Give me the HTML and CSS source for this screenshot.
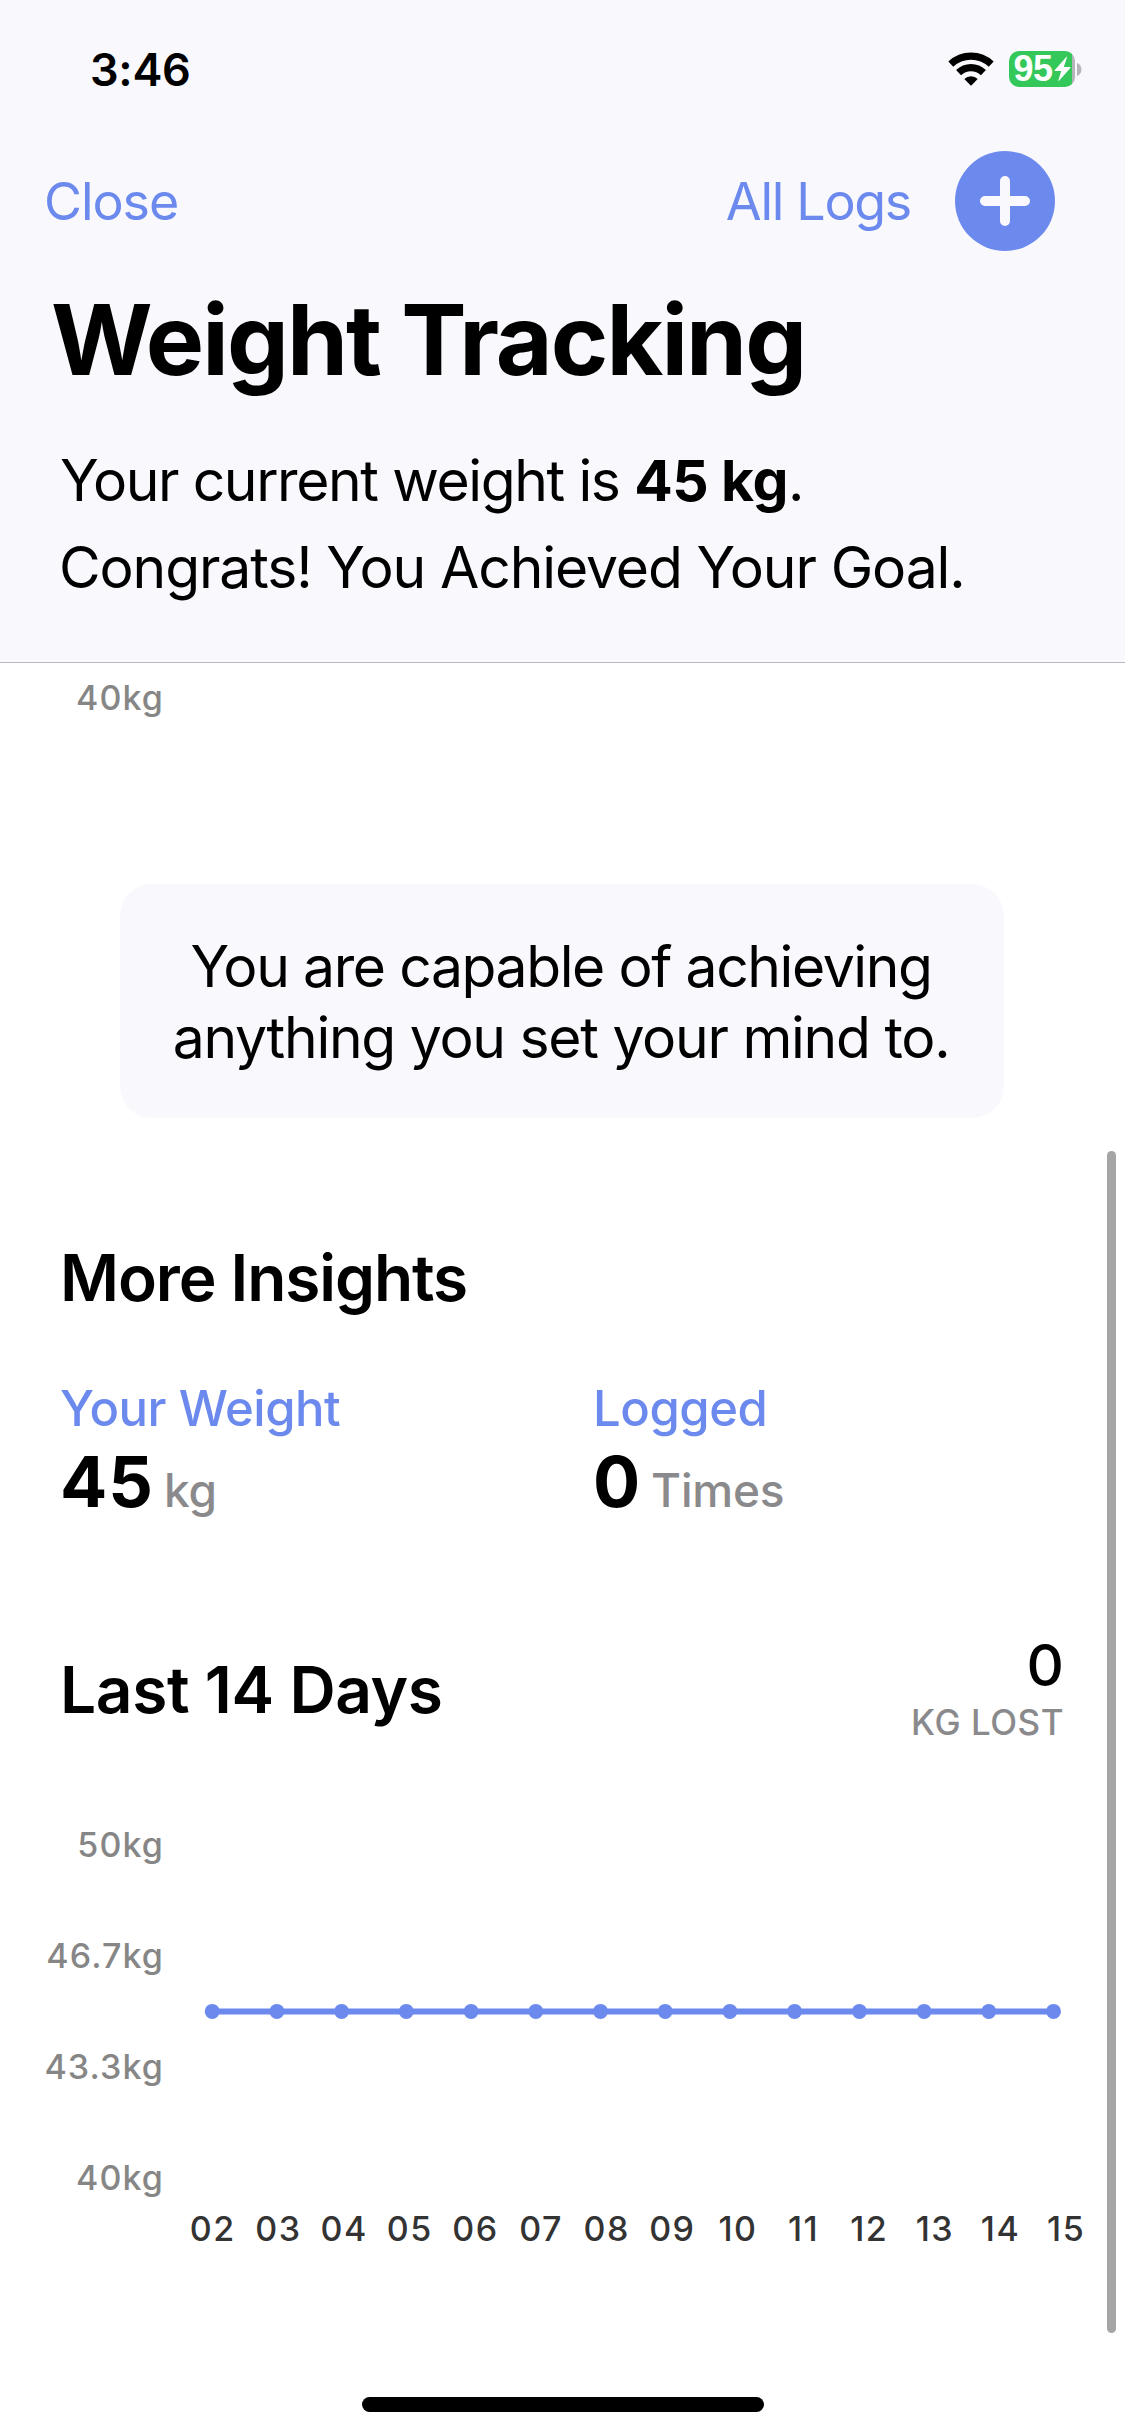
FILE: index.html
```html
<!DOCTYPE html>
<html lang="en">
<head>
<meta charset="utf-8">
<title>Weight Tracking</title>
<link rel="stylesheet" href="styles.css">
</head>
<body>
<div class="screen">
  <header class="header">
    <div class="status-bar">
      <span class="time">3:46</span>
      <div class="status-icons">
        <svg class="wifi" width="46" height="34" viewBox="0 0 46 34" fill="none" stroke="#000" stroke-width="7.2">
          <path d="M2.8 12.2A29.5 29.5 0 0 1 43.2 12.2"/>
          <path d="M10.6 20.6A17.8 17.8 0 0 1 35.4 20.6"/>
          <path d="M16.3 27A9.6 9.6 0 0 1 29.7 27L23 33.8Z" fill="#000" stroke="none"/>
        </svg>
        <div class="battery">
          <div class="battery-body">
            <span class="battery-level">95</span>
            <svg class="bolt" width="17" height="26" viewBox="0 0 17 26"><path d="M12.5 0.8L0.6 14.2Q0.2 15 1.1 15H7.2L4.3 24.6Q4.4 25.3 5 24.8L16.4 12Q16.7 11 15.9 11H9.8L13 1.2Q13 .5 12.5 .8Z" fill="#fff"/></svg>
          </div>
          <svg width="5" height="13" viewBox="0 0 5 13"><path d="M0 0Q4.4 1.6 4.4 6.5T0 13Z" fill="#b4b4b9"/></svg>
        </div>
      </div>
    </div>
    <nav class="nav">
      <a class="nav-link">Close</a>
      <div class="nav-actions">
        <a class="nav-link nav-logs">All Logs</a>
        <svg width="100" height="100" viewBox="0 0 100 100"><circle cx="50" cy="50" r="50" fill="#6c8aee"/><path d="M30 50H70M50 30V70" stroke="#f9f8fd" stroke-width="10" stroke-linecap="round"/></svg>
      </div>
    </nav>
    <h1 class="title">Weight Tracking</h1>
    <p class="summary">Your current weight is <strong>45 kg</strong>.</p>
    <p class="summary summary-goal">Congrats! You Achieved Your Goal.</p>
  </header>
  <main>
    <div class="axis-label axis-label-first">40kg</div>
    <div class="quote"><span class="quote-top">You are capable of achieving</span><span class="quote-bottom">anything you set your mind to.</span></div>
    <h2 class="heading insights-heading">More Insights</h2>
    <div class="insights">
      <div>
        <div class="insight-label">Your Weight</div>
        <div class="insight-value"><b>45</b><span>kg</span></div>
      </div>
      <div>
        <div class="insight-label">Logged</div>
        <div class="insight-value"><b>0</b><span>Times</span></div>
      </div>
    </div>
    <div class="period">
      <h2 class="heading period-heading">Last 14 Days</h2>
      <div class="lost"><div class="lost-value">0</div><div class="lost-label">KG LOST</div></div>
    </div>
    <div class="chart">
      <div class="y-axis">
        <div class="axis-label">50kg</div>
        <div class="axis-label">46.7kg</div>
        <div class="axis-label">43.3kg</div>
        <div class="axis-label">40kg</div>
      </div>
      <div class="plot">
        <svg class="line" width="920" height="420" viewBox="0 0 920 420" fill="#6c8aee">
          <path d="M33.2 222.4H874.5" stroke="#6c8aee" stroke-width="6"/>
          <circle cx="33.2" cy="222.4" r="7.5"/><circle cx="97.9" cy="222.4" r="7.5"/><circle cx="162.6" cy="222.4" r="7.5"/><circle cx="227.3" cy="222.4" r="7.5"/><circle cx="292.1" cy="222.4" r="7.5"/><circle cx="356.8" cy="222.4" r="7.5"/><circle cx="421.5" cy="222.4" r="7.5"/><circle cx="486.2" cy="222.4" r="7.5"/><circle cx="550.9" cy="222.4" r="7.5"/><circle cx="615.6" cy="222.4" r="7.5"/><circle cx="680.4" cy="222.4" r="7.5"/><circle cx="745.1" cy="222.4" r="7.5"/><circle cx="809.8" cy="222.4" r="7.5"/><circle cx="874.5" cy="222.4" r="7.5"/>
        </svg>
        <div class="x-axis"><span>02</span><span>03</span><span>04</span><span>05</span><span>06</span><span>07</span><span>08</span><span>09</span><span>10</span><span>11</span><span>12</span><span>13</span><span>14</span><span>15</span></div>
      </div>
    </div>
  </main>
  <div class="home-indicator"></div>
  <div class="scrollbar"></div>
</div>
</body>
</html>
```
FILE: styles.css
```css
* { box-sizing: border-box; }
body {
  margin: 0;
  background: #fff;
  color: #000;
  font-family: Inter, "Liberation Sans", sans-serif;
}
h1, h2, p { margin: 0; }
svg { display: block; }
.screen {
  position: relative;
  display: flex;
  flex-direction: column;
  width: 1125px;
  height: 2436px;
  overflow: hidden;
}

/* Header */
.header {
  height: 663px;
  background: #f9f8fd;
  border-bottom: 1px solid #bab9bf;
}
.status-bar {
  display: flex;
  align-items: center;
  justify-content: space-between;
  height: 138px;
  padding: 0 43px 0 90px;
}
.time { font-size: 45px; font-weight: 600; letter-spacing: -0.3px; }
.status-icons { display: flex; align-items: center; gap: 15px; }
.battery { display: flex; align-items: center; gap: 2.5px; }
.battery-body {
  display: flex;
  align-items: center;
  width: 66px;
  height: 36px;
  padding-left: 5px;
  border-radius: 10px;
  background: linear-gradient(to right, #34c759 63px, #b4b4b9 63px);
}
.battery-level {
  width: 40px;
  font: 700 36px/36px "Liberation Sans", sans-serif;
  letter-spacing: -0.6px;
  color: #fff;
}
.nav {
  display: flex;
  align-items: center;
  justify-content: space-between;
  height: 126px;
  padding: 0 70px 0 44px;
}
.nav-actions { display: flex; align-items: center; gap: 44px; }
.nav-link { font-size: 52px; color: #6c8aee; letter-spacing: -1.05px; }
.nav-logs { letter-spacing: -1.31px; }
.title {
  padding-left: 51px;
  margin-bottom: 22px;
  font-size: 98px;
  line-height: 151px;
  letter-spacing: -1.93px;
}
.summary {
  padding-left: 60px;
  font-size: 57px;
  line-height: 87px;
  letter-spacing: -1.4px;
}
.summary strong { font-weight: 700; letter-spacing: -0.5px; }
.summary-goal { padding-left: 59px; letter-spacing: -1.12px; }

/* Content */
.heading { font-size: 64px; font-weight: 600; line-height: 80px; }
.axis-label {
  width: 179px;
  padding-right: 15px;
  font-size: 34px;
  font-weight: 500;
  letter-spacing: 1.1px;
  text-align: right;
  color: #868686;
}
.axis-label-first { line-height: 69px; }
.quote {
  display: flex;
  flex-direction: column;
  align-items: center;
  justify-content: center;
  width: 884px;
  height: 234px;
  margin: 152px 0 0 120px;
  padding: 2px 2px 0 0;
  border-radius: 32px;
  background: #f9f8fd;
  font-size: 57px;
  line-height: 71px;
}
.quote-top { letter-spacing: -1.41px; }
.quote-bottom { letter-spacing: -1.27px; }
.insights-heading { margin-top: 120px; padding-left: 60px; letter-spacing: -1.09px; }
.insights {
  display: grid;
  grid-template-columns: 533px 1fr;
  margin-top: 61px;
  padding-left: 60px;
}
.insight-label {
  font-size: 49px;
  font-weight: 550;
  line-height: 60px;
  letter-spacing: -0.45px;
  color: #6c8aee;
}
.insight-value {
  display: flex;
  align-items: baseline;
  gap: 10px;
  height: 86px;
  font-size: 46px;
  line-height: 86px;
}
.insight-value b { font-size: 70px; letter-spacing: 0.9px; }
.insight-value span { font-weight: 450; letter-spacing: -0.2px; color: #8a8a8d; }
.period {
  display: flex;
  align-items: center;
  justify-content: space-between;
  margin-top: 105px;
  padding: 0 61px 0 60px;
}
.period-heading { padding-top: 5px; letter-spacing: -0.4px; }
.lost { text-align: right; }
.lost-value { font-size: 58px; font-weight: 500; line-height: 70px; }
.lost-label {
  font-size: 35px;
  font-weight: 450;
  line-height: 44px;
  letter-spacing: 0.5px;
  color: #8a8a8d;
}

/* Chart */
.chart { display: flex; margin-top: 45px; }
.y-axis {
  display: grid;
  grid-template-rows: repeat(4, 111px);
  line-height: 111px;
}
.plot { width: 920px; }
.x-axis {
  display: grid;
  grid-template-columns: repeat(14, 1fr);
  padding-left: 1px;
  font-size: 34px;
  font-weight: 500;
  line-height: 40px;
  letter-spacing: 1.5px;
  text-align: center;
  color: #333;
}

/* System overlays */
.home-indicator {
  position: absolute;
  left: 362px;
  bottom: 24px;
  width: 402px;
  height: 15px;
  border-radius: 8px;
  background: #000;
}
.scrollbar {
  position: absolute;
  top: 1151px;
  right: 9px;
  width: 9px;
  height: 1182px;
  border-radius: 5px;
  background: #a5a5a5;
}
```
